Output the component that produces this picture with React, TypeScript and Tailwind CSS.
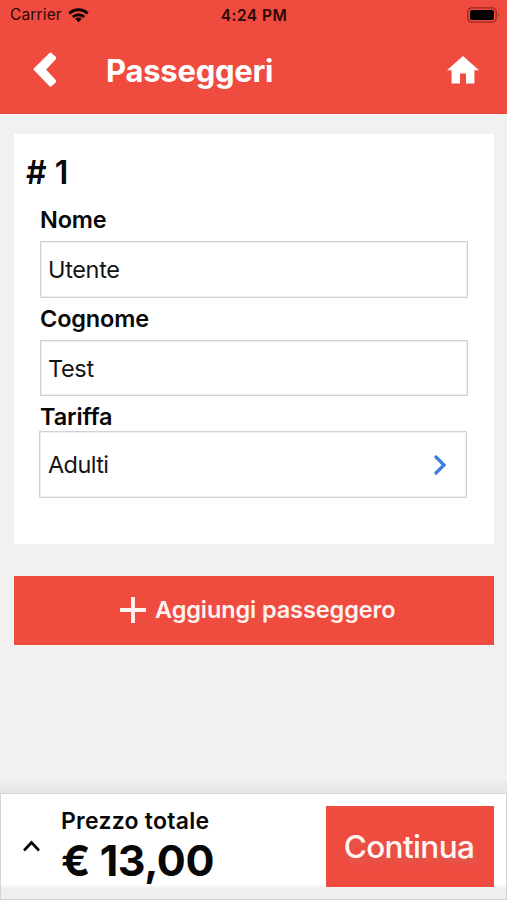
import React from 'react';

interface FieldProps {
    label: string;
    value: string;
}

const TextField: React.FC<FieldProps> = ({ label, value }) => (
    <div className="mb-[5px]">
        <div className="h-[37px] text-[23.5px] leading-[32px] font-semibold tracking-[-0.15px]">{label}</div>
        <div className="flex h-[56.5px] w-[427.5px] items-center border border-[#d2d2d2] pl-[7px] text-[23.5px] text-[#151515] ring-1 ring-[#eeeeee] ring-inset">
            <span className="pt-[1px] tracking-[-0.35px]">{value}</span>
        </div>
    </div>
);

const StatusBar: React.FC = () => (
    <div className="flex h-[30px] items-center justify-between pr-[7px] pl-[10px] text-[15.5px] text-[#2c0806]">
        <div className="flex w-[100px] items-center gap-[6px]">
            <span className="tracking-[0.15px]">Carrier</span>
            <svg width="21" height="15" viewBox="0 0 21 15" fill="none" stroke="#120201" strokeWidth="2.9">
                <path d="M1.3 5.5C6.5 .5 14.5 .5 19.7 5.5" />
                <path d="M4.8 9C8 6 13 6 16.2 9" />
                <path d="M7.2 10.7Q10.5 8.4 13.8 10.7L10.5 14.3Z" fill="#120201" stroke="none" />
            </svg>
        </div>
        <span className="-ml-[2px] pt-[1px] font-semibold tracking-[0.5px]">4:24 PM</span>
        <div className="flex w-[100px] justify-end">
            <svg width="33" height="16" viewBox="0 0 33 16">
                <rect x=".8" y=".8" width="28.4" height="14.4" rx="4" fill="none" stroke="#97291f" strokeWidth="1.3" />
                <rect x="3" y="3" width="24" height="10" rx="2" fill="#000" />
                <path d="M31 5.5Q33 8 31 10.5Z" fill="#97291f" />
            </svg>
        </div>
    </div>
);

const App: React.FC = () => {
    return (
        <div className="flex h-[900px] w-[507px] flex-col overflow-hidden bg-[#f1f1f1] font-['Inter','Liberation_Sans',sans-serif] text-[#080808]">
            <header className="h-[114px] shrink-0 bg-[#f04b3f]">
                <StatusBar />
                <div className="flex h-[80px] items-center pr-[28px] pl-[33px] text-white">
                    <svg width="24" height="36" viewBox="0 0 24 36" fill="currentColor" stroke="currentColor" strokeWidth="2" strokeLinejoin="round">
                        <path d="M17.5 1.5L1.5 17.2L17.5 33.8L22 29.8V28.8L11.8 17.7L22 6.5V5.5Z" />
                    </svg>
                    <h1 className="ml-[49px] flex-1 pt-[3px] text-[31px] font-bold tracking-[-0.25px]">Passeggeri</h1>
                    <svg width="32" height="28" viewBox="0 0 32 28" fill="currentColor">
                        <path d="M16 0L32 14.3H27.4V27.5H19V17.5H13V27.5H4.6V14.3H0Z" />
                    </svg>
                </div>
            </header>

            <main className="flex-1 px-[14px] pt-[20px]">
                <section className="h-[409.5px] w-[480px] bg-white pt-[20px] pl-[26px]">
                    <h2 className="-ml-[14px] h-[50px] text-[32px] leading-[38px] font-semibold">
                        # 1
                    </h2>
                    <TextField label="Nome" value="Utente" />
                    <TextField label="Cognome" value="Test" />
                    <div className="-mt-[1px] h-[31px] text-[23.5px] leading-[33px] font-semibold tracking-[-0.15px]">Tariffa</div>
                    <button className="-ml-[1px] flex h-[67px] w-[428px] items-center justify-between border border-[#d2d2d2] pr-[19px] pl-[8px] text-[23.5px] text-[#151515] ring-1 ring-[#eeeeee] ring-inset">
                        <span className="tracking-[-0.6px]">Adulti</span>
                        <svg width="14" height="20" viewBox="0 0 14 20" fill="none" stroke="#3b7de0" strokeWidth="3.2" strokeLinecap="round">
                            <path d="M3 2L11 10L3 18" />
                        </svg>
                    </button>
                </section>

                <button className="mt-[32px] flex h-[69px] w-[480px] items-center bg-[#f04b3f] pl-[106px] text-[23.5px] font-semibold text-[#fff3f1]">
                    <svg width="26" height="26" viewBox="0 0 26 26" stroke="currentColor" strokeWidth="3.8">
                        <path d="M13 0V26M0 13H26" />
                    </svg>
                    <span className="ml-[9px] tracking-[-0.1px]">Aggiungi passeggero</span>
                </button>
            </main>

            <div className="h-[13px] shrink-0 bg-linear-to-b from-[#ededed] to-[#e6e6e6]" />
            <footer className="h-[107px] shrink-0 border border-[#d5d5d5] bg-linear-to-b from-white from-86% to-[#efefef] to-90%">
                <div className="flex pt-[12px] pr-[12px] pl-[22px]">
                    <svg className="mt-[34px]" width="17" height="12" viewBox="0 0 17 12" fill="none" stroke="#000" strokeWidth="2.6">
                        <path d="M1 10.5L8.5 2.5L16 10.5" />
                    </svg>
                    <div className="ml-[21px] flex-1">
                        <div className="text-[23px] leading-[30px] font-semibold tracking-[0.25px]">Prezzo totale</div>
                        <div className="text-[43px] leading-[49px] font-bold tracking-[-0.45px]">€ 13,00</div>
                    </div>
                    <button className="flex h-[81px] w-[168px] shrink-0 items-center justify-center bg-[#f04b3f] pr-[2px] text-[31.5px] font-medium tracking-[-0.6px] text-[#fff6f4] text-shadow-[3px_5px_6px_rgb(170_140_130/0.3)]">
                        Continua
                    </button>
                </div>
            </footer>
        </div>
    );
};

export default App;
